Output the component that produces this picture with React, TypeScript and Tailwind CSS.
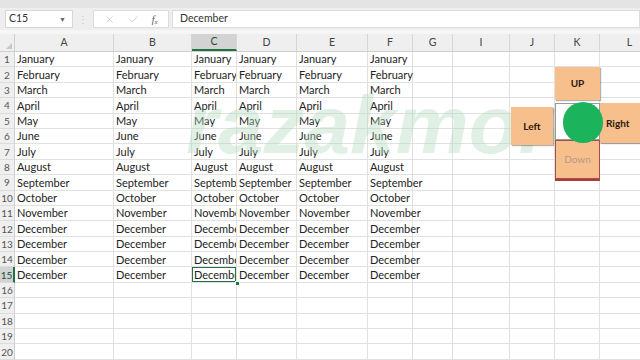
import { X, Check } from 'lucide-react'

const months = [
  'January', 'February', 'March', 'April', 'May', 'June', 'July', 'August',
  'September', 'October', 'November', 'December', 'December', 'December', 'December',
]

const cols = [
  { key: 'A', w: 'w-[99px]' },
  { key: 'B', w: 'w-[78px]' },
  { key: 'C', w: 'w-[45px]' },
  { key: 'D', w: 'w-[60px]' },
  { key: 'E', w: 'w-[71px]' },
  { key: 'F', w: 'w-[45px]' },
  { key: 'G', w: 'w-[40px]' },
  { key: 'I', w: 'w-[57px]' },
  { key: 'J', w: 'w-[45px]' },
  { key: 'K', w: 'w-[45px]' },
  { key: 'L', w: 'w-[60px]' },
]

const filled = ['A', 'B', 'C', 'D', 'E', 'F']

function FormulaBar() {
  return (
    <div className="h-[22px] bg-[#eeeeee] flex items-center">
      <div className="ml-[5px] w-[68px] h-[18px] bg-white border border-[#d6d6d6] flex items-center justify-between px-[3px]">
        <span className="text-[10.5px] text-[#333]">C15</span>
        <span className="text-[7px] text-[#666] mr-[3px]">▼</span>
      </div>
      <div className="w-[20px] flex justify-center text-[#c4c4c4] text-[10px]">⋮</div>
      <div className="w-[76px] h-[18px] bg-white border border-[#dcdcdc] flex items-center justify-around px-[4px]">
        <X size={11} strokeWidth={1.5} className="text-[#bdbdbd]" />
        <Check size={11} strokeWidth={1.5} className="text-[#bdbdbd]" />
        <span className="text-[10px] italic text-[#555] font-['Liberation_Serif',serif]">f<sub className="text-[7px]">x</sub></span>
      </div>
      <div className="ml-[3px] flex-1 h-[18px] bg-white border border-[#dcdcdc] flex items-center pl-[7px]">
        <span className="text-[10.5px] text-[#333]">December</span>
      </div>
    </div>
  )
}

function Sheet() {
  return (
    <div className="flex flex-col">
      {/* column header */}
      <div className="flex h-[18px] bg-[#efefef] border-b border-[#cfcfcf]">
        <div className="w-[15px] shrink-0 border-r border-[#cfcfcf] flex items-end justify-end p-[2px]">
          <span className="w-0 h-0 border-l-[6px] border-l-transparent border-b-[6px] border-b-[#c8c8c8]" />
        </div>
        {cols.map((c) => (
          <div
            key={c.key}
            className={`${c.w} shrink-0 border-r border-[#d6d6d6] flex items-center justify-center text-[10.5px] ${
              c.key === 'C' ? 'bg-[#d3d3d3] border-b-2 border-b-[#217346] text-[#1f4e33]' : 'text-[#444]'
            }`}
          >
            {c.key}
          </div>
        ))}
      </div>
      {Array.from({ length: 20 }, (_, r) => {
        const row = r + 1
        const sel = row === 15
        return (
          <div key={row} className="flex h-[15.4px]">
            <div
              className={`w-[15px] shrink-0 flex items-center justify-center pt-[1px] text-[10px] border-b border-[#dcdcdc] ${
                sel ? 'bg-[#d3d3d3] border-r-2 border-r-[#217346] text-[#1f4e33]' : 'bg-[#efefef] border-r border-r-[#cfcfcf] text-[#555]'
              }`}
            >
              {row}
            </div>
            {cols.map((c) => {
              const text = row <= 15 && filled.includes(c.key) ? months[r] : ''
              const active = sel && c.key === 'C'
              return (
                <div
                  key={c.key}
                  className={`${c.w} shrink-0 relative border-r border-b border-[#e1e1e1] flex items-center pl-[2px] pt-[1px] whitespace-nowrap text-[11px] text-[#222] ${
                    c.key === 'F' ? 'overflow-visible z-[1]' : 'overflow-hidden'
                  }`}
                >
                  {text}
                  {active && <div className="absolute inset-[-1px] border-2 border-[#217346] pointer-events-none" />}
                </div>
              )
            })}
          </div>
        )
      })}
    </div>
  )
}

function Shapes() {
  return (
    <>
      {/* watermark */}
      <div className="absolute left-[186px] top-[84px] text-[82px] font-bold italic leading-none text-[#b5dcbf] opacity-40 font-['Liberation_Sans',sans-serif] pointer-events-none z-[2]">
        razakmore
      </div>
      {/* fill handle */}
      <div className="absolute left-[235px] top-[281px] w-[5px] h-[5px] bg-[#217346] border border-white z-[3]" />
      {/* UP */}
      <div className="absolute left-[555px] top-[67px] w-[45px] h-[33px] bg-[#f7bf8b] shadow-[1px_1px_1px_rgba(0,0,0,0.3)] flex items-center justify-center text-[10px] font-bold text-[#2b1a0e] z-[3]">
        UP
      </div>
      {/* center */}
      <div className="absolute left-[555px] top-[103px] w-[45px] h-[37px] bg-white border border-[#9a9a9a] z-[3]" />
      {/* Left */}
      <div className="absolute left-[511px] top-[107px] w-[42px] h-[38px] bg-[#f7bf8b] shadow-[1px_1px_1px_rgba(0,0,0,0.3)] flex items-center justify-center text-[10px] font-bold text-[#2b1a0e] z-[3]">
        Left
      </div>
      {/* Right */}
      <div className="absolute left-[600px] top-[103px] w-[45px] h-[40px] bg-[#f7bf8b] shadow-[1px_1px_1px_rgba(0,0,0,0.3)] flex items-center pl-[6px] text-[10px] font-bold text-[#2b1a0e] z-[3]">
        Right
      </div>
      {/* Down */}
      <div className="absolute left-[555px] top-[140px] w-[45px] h-[39px] bg-[#f7bf8b] border border-[#a05050] flex items-center justify-center text-[10px] text-[#b39a8a] z-[3]">
        Down
      </div>
      <div className="absolute left-[555px] top-[179px] w-[45px] h-[2px] bg-[#b03a3a] z-[3]" />
      {/* circle */}
      <div className="absolute left-[563px] top-[102px] w-[40px] h-[41px] rounded-full bg-[#1bb35c] z-[4]" />
    </>
  )
}

export default function App() {
  return (
    <div className="relative w-[640px] h-[360px] overflow-hidden bg-white font-['Lato','Open_Sans',sans-serif]">
      <div className="h-[8px] bg-[#e4e4e4]" />
      <FormulaBar />
      <div className="h-[4px] bg-[#f6f6f6]" />
      <Sheet />
      <Shapes />
    </div>
  )
}
